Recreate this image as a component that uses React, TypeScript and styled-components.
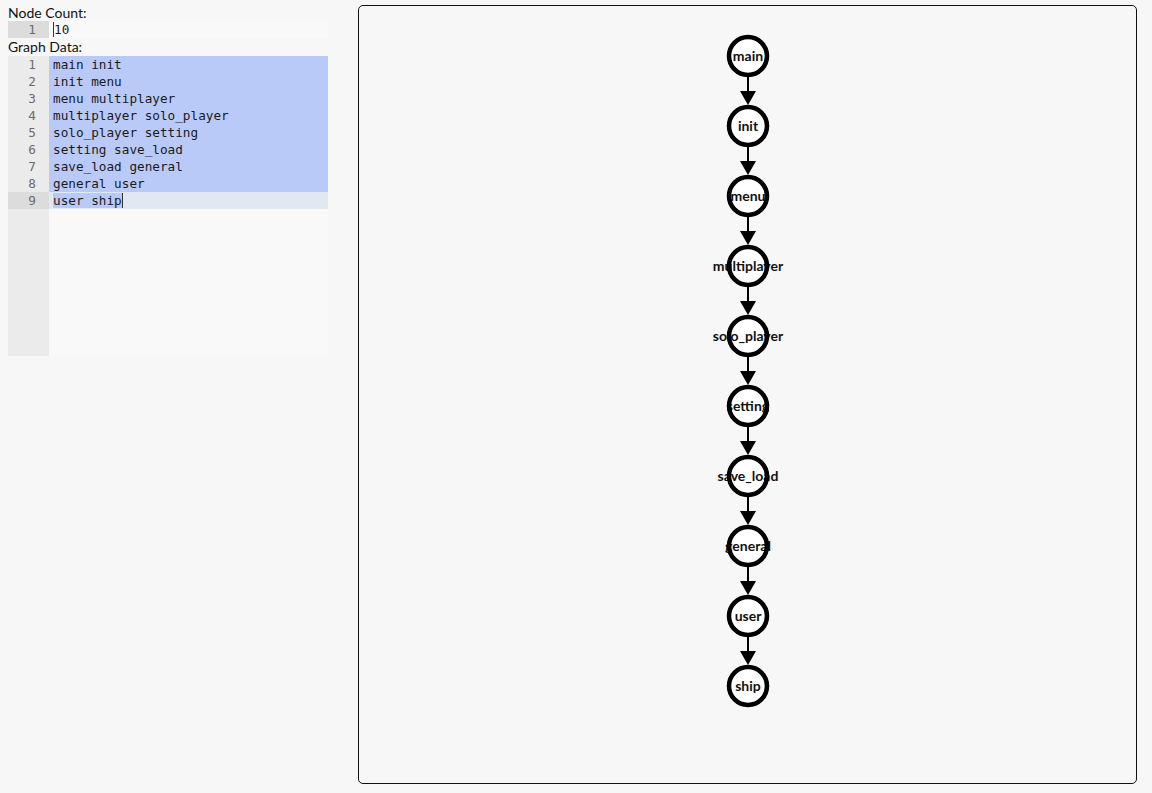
import * as React from "react";
import styled, {createGlobalStyle} from "styled-components";

const GlobalStyle = createGlobalStyle`
    html, body {
        margin: 0;
        padding: 0;
        background: #f7f7f7;
        font-family: Lato, "Noto Sans", sans-serif;
        color: #111;
    }
`;

const Page = styled.div`
    display: flex;
    align-items: flex-start;
    gap: 30px;
    padding: 5px 0 0 8px;
`;

const Sidebar = styled.div`
    width: 320px;
    display: flex;
    flex-direction: column;
    margin-top: -1px;
`;

const Label = styled.div<{ $h: number }>`
    height: ${p => p.$h}px;
    line-height: 17px;
    font-size: 14px;
`;

const Editor = styled.div<{ $h: number }>`
    display: flex;
    height: ${p => p.$h}px;
    background: #f9f9f9;
    font-family: "DejaVu Sans Mono", "Liberation Mono", monospace;
    font-size: 12.7px;
    overflow: hidden;
`;

const Gutter = styled.div`
    width: 41px;
    flex-shrink: 0;
    background: #ebebeb;
    color: #6c6c6c;
`;

const GutterNum = styled.div<{ $active?: boolean }>`
    height: 17px;
    line-height: 18px;
    text-align: right;
    padding-right: 13px;
    background: ${p => p.$active ? "#dcdcdc" : "transparent"};
`;

const Lines = styled.div`
    flex: 1;
    padding-left: 4px;
`;

const Line = styled.div<{ $selected?: boolean, $active?: boolean }>`
    height: 17px;
    line-height: 17px;
    margin-left: -4px;
    padding-left: 4px;
    white-space: pre;
    color: #1a1a1a;
    background: ${p => p.$selected ? "#bacaf8" : p.$active ? "#e0e8f1" : "transparent"};
`;

const Selected = styled.span`
    background: #bacaf8;
`;

const Caret = styled.span`
    display: inline-block;
    width: 0;
    height: 15px;
    vertical-align: -3px;
    border-left: 1px solid #333;
`;

const Canvas = styled.div`
    width: 777px;
    height: 777px;
    border: 1px solid #111;
    border-radius: 5px;
    background: #f7f7f7;
`;

const NodeText = styled.text`
    font-family: Lato, "Noto Sans", sans-serif;
    font-weight: 700;
    font-size: 14px;
    fill: #111;
`;

const nodes = ["main", "init", "menu", "multiplayer", "solo_player", "setting", "save_load", "general", "user", "ship"];
const edges = nodes.slice(0, -1).map((n, i) => `${n} ${nodes[i + 1]}`);

const CX = 389;
const CY = 50;
const STEP = 70;
const R = 19;

function Graph() {
    return <svg width="777" height="777">
        {nodes.slice(1).map((n, i) => {
            const from = CY + i * STEP + R + 2;
            const tip = CY + (i + 1) * STEP - R - 2;
            return <g key={n}>
                <line x1={CX} y1={from} x2={CX} y2={tip - 12} stroke="#000" strokeWidth={2}/>
                <polygon points={`${CX - 8},${tip - 14} ${CX + 8},${tip - 14} ${CX},${tip}`} fill="#000"/>
            </g>;
        })}
        {nodes.map((n, i) => {
            const cy = CY + i * STEP;
            return <g key={n}>
                <circle cx={CX} cy={cy} r={R} fill="#fff"/>
                <NodeText x={CX} y={cy + 4.5} textAnchor="middle">{n}</NodeText>
                <circle cx={CX} cy={cy} r={R} fill="none" stroke="#000" strokeWidth={4.5}/>
            </g>;
        })}
    </svg>;
}

export default function App() {
    return <>
        <GlobalStyle/>
        <Page>
            <Sidebar>
                <Label $h={17}>Node Count:</Label>
                <Editor $h={17}>
                    <Gutter>
                        <GutterNum $active>1</GutterNum>
                    </Gutter>
                    <Lines>
                        <Line><Caret/>10</Line>
                    </Lines>
                </Editor>
                <Label $h={18}>Graph Data:</Label>
                <Editor $h={300}>
                    <Gutter>
                        {edges.map((_, i) =>
                            <GutterNum key={i} $active={i === edges.length - 1}>{i + 1}</GutterNum>)}
                    </Gutter>
                    <Lines>
                        {edges.slice(0, -1).map(e => <Line key={e} $selected>{e}</Line>)}
                        <Line $active><Selected>{edges[edges.length - 1]}</Selected><Caret/></Line>
                    </Lines>
                </Editor>
            </Sidebar>
            <Canvas>
                <Graph/>
            </Canvas>
        </Page>
    </>;
}
